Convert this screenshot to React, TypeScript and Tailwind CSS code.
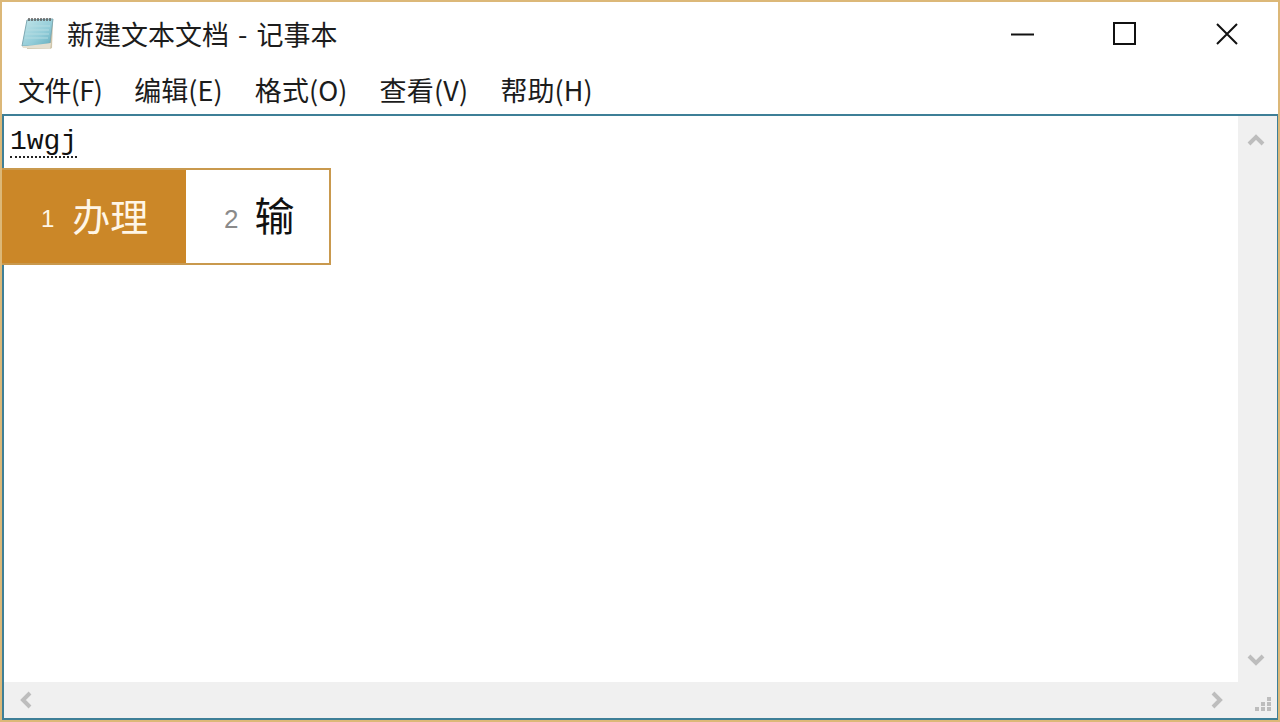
const cjk = { fontFamily: '"Noto Sans CJK SC", "Liberation Sans", sans-serif' };

function NotepadIcon() {
  return (
    <svg width="36" height="36" viewBox="0 0 36 36" className="shrink-0">
      <defs>
        <linearGradient id="page" x1="0" y1="0" x2="1" y2="1">
          <stop offset="0" stopColor="#c4e6ea" />
          <stop offset="0.6" stopColor="#92ccd8" />
          <stop offset="1" stopColor="#62adbe" />
        </linearGradient>
      </defs>
      <path d="M7 6 L33 5 L32 33 L30 34 L7 34 Z" fill="#cfc5aa" />
      <path d="M7 5 L33 4 L30 28 Q20 32 2 31 Z" fill="url(#page)" stroke="#7fa9b3" strokeWidth="1" />
      <path d="M7 31 L2 31 L3 33 L30 34 L31 28 Z" fill="#e4dfd0" />
      <path d="M7 11 H30 M6 15 H29 M5 19 H29 M5 23 H28" stroke="#b4dce2" strokeWidth="1" />
      <path d="M9 3 V6 M12 3 V6 M15 3 V6 M18 3 V6 M21 3 V6 M24 3 V6 M27 3 V6 M30 3 V6" stroke="#555" strokeWidth="1.4" />
    </svg>
  );
}

function Chevron({ d }: { d: string }) {
  return (
    <svg width="20" height="20" viewBox="0 0 20 20">
      <path d={d} fill="none" stroke="#bdbdbd" strokeWidth="4" />
    </svg>
  );
}

const menus = [
  { label: "文件(F)", cls: "tracking-[-0.6px]" },
  { label: "编辑(E)", cls: "tracking-[0.1px]" },
  { label: "格式(O)", cls: "tracking-[0.1px]" },
  { label: "查看(V)", cls: "tracking-[0.2px]" },
  { label: "帮助(H)", cls: "tracking-[0.1px]" },
];

export default function App() {
  return (
    <div className="w-[1280px] h-[722px] flex flex-col bg-white border-2 border-[#dcb878] overflow-hidden text-[#1c1c1c]" style={cjk}>
      {/* Title bar */}
      <div className="h-[56px] flex items-center shrink-0">
        <div className="ml-[18px] mr-[11px] mt-[6px]">
          <NotepadIcon />
        </div>
        <span className="text-[27px] leading-none mt-[6px] whitespace-pre [word-spacing:3px]">新建文本文档 - 记事本</span>
        <div className="ml-auto flex items-center mr-[39px] mt-[8px] gap-[78px]">
          <svg width="24" height="24" viewBox="0 0 24 24">
            <path d="M0 12.5 H23" stroke="#111" strokeWidth="2" />
          </svg>
          <svg width="24" height="24" viewBox="0 0 24 24">
            <rect x="1" y="1" width="21" height="21" fill="none" stroke="#111" strokeWidth="2" />
          </svg>
          <svg width="24" height="24" viewBox="0 0 24 24">
            <path d="M2 2 L22 22 M22 2 L2 22" stroke="#111" strokeWidth="2" />
          </svg>
        </div>
      </div>

      {/* Menu bar */}
      <div className="h-[56px] flex items-center shrink-0 pl-[16px] gap-[32px] pt-[7px]">
        {menus.map((m) => (
          <span key={m.label} className={`text-[27px] leading-none whitespace-nowrap ${m.cls}`}>
            {m.label}
          </span>
        ))}
      </div>

      {/* Edit control */}
      <div className="relative flex-1 min-h-0 border-2 border-[#3e7f97] border-r-[1px] flex flex-col">
        <div className="flex-1 min-h-0 flex">
          <div className="flex-1 pl-[6px]">
            <span
              className="text-[28px] leading-[34px] inline-block mt-[9px] border-b-2 border-dotted border-[#222] h-[33px] text-[#111]"
              style={{ fontFamily: '"Liberation Mono", monospace' }}
            >
              1wgj
            </span>
          </div>
          <div className="w-[39px] bg-[#f0f0f0] flex flex-col items-center justify-between pt-[14px] pb-[12px] pr-[4px]">
            <Chevron d="M3 14 L10 7 L17 14" />
            <Chevron d="M3 6 L10 13 L17 6" />
          </div>
        </div>
        <div className="h-[36px] shrink-0 bg-[#f0f0f0] flex items-center pl-[12px] pr-[50px] justify-between">
          <Chevron d="M14 3 L7 10 L14 17" />
          <Chevron d="M6 3 L13 10 L6 17" />
        </div>
        <svg width="18" height="18" viewBox="0 0 18 18" className="absolute right-[5px] bottom-[5px]">
          <path d="M13 2 h4 v4 h-4 Z M7 7 h4 v4 h-4 Z M13 7 h4 v4 h-4 Z M1 12 h4 v4 h-4 Z M7 12 h4 v4 h-4 Z M13 12 h4 v4 h-4 Z" fill="#bdbdbd" />
        </svg>

        {/* IME candidates */}
        <div className="absolute left-[-2px] top-[52px] w-[329px] h-[97px] flex border-2 border-l-0 border-[#c9994e] bg-white">
          <div className="w-[184px] bg-[#cb8728] flex items-center text-[#fff6e6] pl-[39px]">
            <span className="text-[24px] leading-none mr-[18px] mt-[4px]" style={{ fontFamily: '"Liberation Sans", sans-serif' }}>1</span>
            <span className="text-[38px] leading-none mb-[4px]">办理</span>
          </div>
          <div className="flex-1 flex items-center pl-[38px]">
            <span className="text-[26px] leading-none text-[#8a8a8a] mr-[16px] mt-[4px]" style={{ fontFamily: '"Liberation Sans", sans-serif' }}>2</span>
            <span className="text-[40px] leading-none text-[#111] mb-[6px]">输</span>
          </div>
        </div>
      </div>
    </div>
  );
}
